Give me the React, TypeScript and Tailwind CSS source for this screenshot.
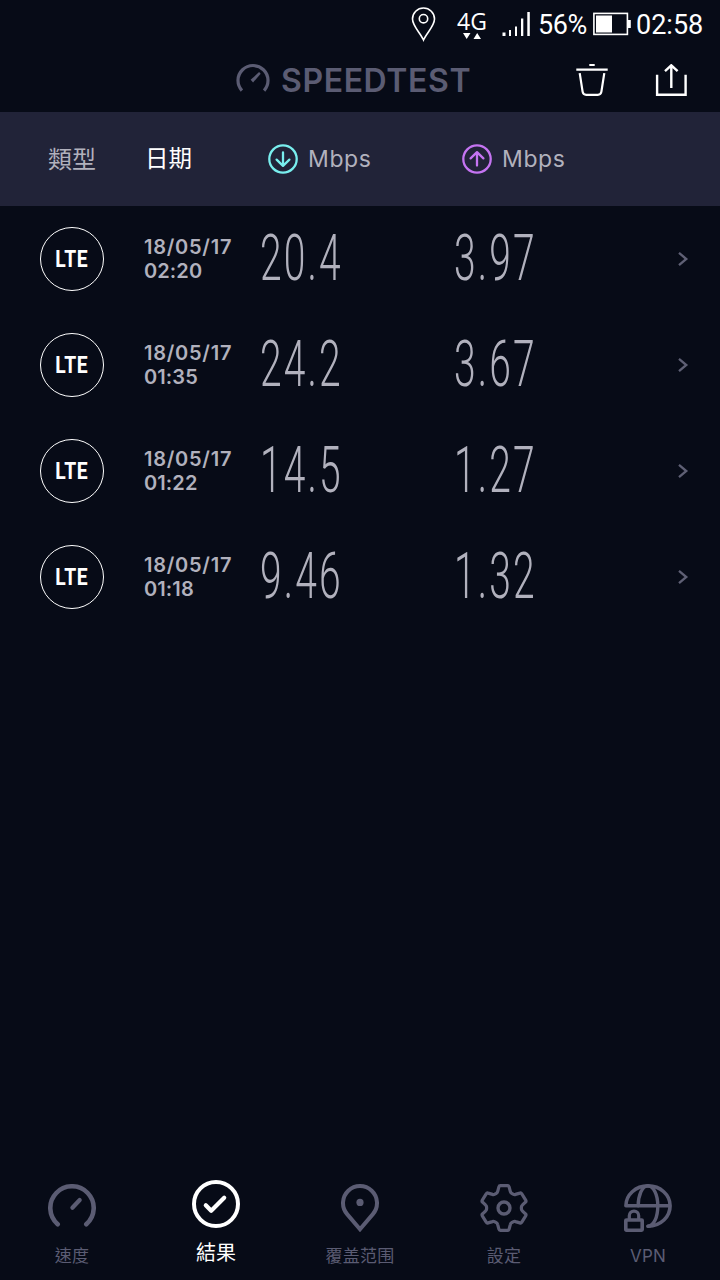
type Result = {
  id: string;
  date: string;
  time: string;
  download: string;
  upload: string;
};

const results: Result[] = [
  { id: "1", date: "18/05/17", time: "02:20", download: "20.4", upload: "3.97" },
  { id: "2", date: "18/05/17", time: "01:35", download: "24.2", upload: "3.67" },
  { id: "3", date: "18/05/17", time: "01:22", download: "14.5", upload: "1.27" },
  { id: "4", date: "18/05/17", time: "01:18", download: "9.46", upload: "1.32" },
];

function StatusBar() {
  return (
    <div className="flex h-12 items-start pl-[411px] text-white">
      <svg className="mt-[7px] h-[35px] w-[25px]" viewBox="0 0 25 35" fill="none" stroke="currentColor" strokeWidth="1.6">
        <path d="M12.5 33C9.5 26 1.5 19 1.5 12a11 11 0 0 1 22 0c0 7-8 14-11 21Z" />
        <circle cx="12.5" cy="11.7" r="4.2" />
      </svg>
      <div className="ml-5 mt-2.5 flex w-8 flex-col items-center">
        <span className="font-['Open_Sans',sans-serif] text-[23px] leading-[23px]">4G</span>
        <svg className="h-[6px] w-[18px]" viewBox="0 0 18 6" fill="currentColor">
          <path d="M0 0h7.5L3.7 6zM10.5 6H18L14.2 0z" />
        </svg>
      </div>
      <svg className="ml-[14px] mt-3 h-6 w-7" viewBox="0 0 28 24" fill="currentColor">
        <path d="M0.5 20.5h3V24h-3zM7 18h2v6H7zM13 14.5h2V24h-2zM19 6.5h2.3V24H19zM25.3 0h2.5v24h-2.5z" />
      </svg>
      <span className="ml-2 mt-2.5 w-[55px] whitespace-nowrap font-[Roboto,sans-serif] text-[27px] leading-[30px] tracking-[-0.4px]">56%</span>
      <svg className="mt-3 h-6 w-[38px]" viewBox="0 0 38 24" fill="none">
        <rect x="0.9" y="1.4" width="33.5" height="21" stroke="currentColor" strokeWidth="1.6" />
        <path d="M3 3.5h16v17H3zM35 8h2.8v8H35z" fill="currentColor" />
      </svg>
      <span className="ml-[5px] mt-2.5 whitespace-nowrap font-[Roboto,sans-serif] text-[27px] leading-[30px]">02:58</span>
    </div>
  );
}

function Header() {
  return (
    <header className="flex h-16 items-start pl-[236px]">
      <svg className="mt-[15px] h-[34px] w-[34px] text-[#5b5c73]" viewBox="0 0 34 34" fill="none" stroke="currentColor" strokeWidth="3.2">
        <path d="M5.9 27.6A15 15 0 1 1 28.1 27.6" />
        <path d="m14.6 16.8 8.5-7.7 1.6 1.7-7.6 8.6z" fill="currentColor" stroke="none" />
      </svg>
      <h1 className="ml-[11px] mt-[15px] w-[190px] whitespace-nowrap font-[Inter,sans-serif] text-[32px] font-semibold leading-9 tracking-[0.6px] text-[#5b5c73]">
        SPEEDTEST
      </h1>
      <button type="button" aria-label="Delete" className="ml-[105px] mt-4 text-white">
        <svg className="h-8 w-8" viewBox="0 0 32 32" fill="none" stroke="currentColor" strokeWidth="2.2">
          <path d="M13.3 1h5.4M0.3 5.6h31.4" />
          <path d="m3.7 9.2 2.9 18.4q.5 3.2 3.6 3.2h11.6q3.1 0 3.6-3.2l2.9-18.4" />
        </svg>
      </button>
      <button type="button" aria-label="Share" className="ml-[47px] mt-4 text-white">
        <svg className="h-8 w-8" viewBox="0 0 32 32" fill="none" stroke="currentColor" strokeWidth="2.4">
          <path d="M2.1 10.8v20h28.5v-20" />
          <path d="M16.3 24V1.5M10 7.2l6.3-5.9 6.3 5.9" />
        </svg>
      </button>
    </header>
  );
}

function ArrowCircle({ up = false }: { up?: boolean }) {
  return (
    <svg className="h-[30px] w-[30px] shrink-0" viewBox="0 0 30 30" fill="none" stroke="currentColor" strokeWidth="2.3" strokeLinecap="round" strokeLinejoin="round">
      <circle cx="15" cy="15" r="13.7" />
      <path d={up ? "M15 21.5V8.5M8.6 14.4 15 8.2l6.4 6.2" : "M15 8.5v13M8.6 15.6 15 21.8l6.4-6.2"} />
    </svg>
  );
}

function TableHead() {
  return (
    <div className="flex h-[94px] items-center bg-[#212338] font-['Noto_Sans_CJK_TC',sans-serif] text-2xl text-[#b1b1bd]">
      <span className="w-[97px] shrink-0 pb-[3px] pl-12">類型</span>
      <span className="w-[171px] shrink-0 pb-[3px] pl-12 text-[23.5px] text-white">日期</span>
      <div className="flex w-[194px] items-center gap-[10px]">
        <span className="text-[#79eeee]">
          <ArrowCircle />
        </span>
        <span className="pt-px font-[Inter,sans-serif] text-[23px] tracking-[0.6px]">Mbps</span>
      </div>
      <div className="flex items-center gap-[10px]">
        <span className="text-[#c574f2]">
          <ArrowCircle up />
        </span>
        <span className="pt-px font-[Inter,sans-serif] text-[23px] tracking-[0.6px]">Mbps</span>
      </div>
    </div>
  );
}

function Speed({ value }: { value: string }) {
  return (
    <span className="w-[194px] shrink-0 pb-[3px]">
      <span className="inline-block origin-left scale-x-[0.6] whitespace-nowrap font-[Roboto,sans-serif] text-[65px] font-light leading-[70px] tracking-[3.6px]">
        {value}
      </span>
    </span>
  );
}

function ResultRow({ result }: { result: Result }) {
  return (
    <li className="flex h-[106px] items-center pl-10 text-[#b1b1bd]">
      <span className="grid h-16 w-16 shrink-0 place-items-center rounded-full border-[1.5px] border-white">
        <span className="origin-center scale-x-[0.84] pt-0.5 font-[Roboto,sans-serif] text-[23px] font-bold tracking-[0.8px] text-white">LTE</span>
      </span>
      <div className="ml-10 w-[116px] shrink-0 whitespace-nowrap font-[Inter,sans-serif] text-xl font-semibold leading-6">
        <p className="tracking-[0.75px]">{result.date}</p>
        <p className="tracking-[0.1px]">{result.time}</p>
      </div>
      <Speed value={result.download} />
      <Speed value={result.upload} />
      <svg className="ml-[29px] h-4 w-3 text-[#5f6075]" viewBox="0 0 12 16" fill="none" stroke="currentColor" strokeWidth="2.3">
        <path d="m2 1.8 7.3 6.2L2 14.2" />
      </svg>
    </li>
  );
}

function SpeedIcon() {
  return (
    <>
      <path strokeWidth="4.6" d="M9.7 40.3A21.7 21.7 0 1 1 38.3 40.3" />
      <path strokeWidth="4.2" d="m24.4 23.8 7.3-7.8" />
    </>
  );
}

function ResultsIcon() {
  return (
    <>
      <circle cx="24" cy="24" r="22" strokeWidth="4" />
      <path strokeWidth="4.2" d="m13.8 25.2 5.4 5.6 13-13" />
    </>
  );
}

function CoverageIcon() {
  return (
    <>
      <path strokeWidth="4" strokeLinejoin="miter" d="M11.1 30.1a17 17 0 1 1 25.8 0L24 45.2Z" />
      <circle cx="24" cy="18.4" r="3.6" fill="currentColor" stroke="none" />
    </>
  );
}

function SettingsIcon() {
  return (
    <>
      <path
        strokeWidth="3.2"
        d="M20.4 1.6h7.2q1.2 0 1.5 1.2l1.2 4.6q.3 1.3 1.4 1.9l1.4.8q1.2.7 2.4.3l4.4-1.3q1.2-.4 1.9.7l3.9 6.4q.7 1.1-.3 2l-3.1 3q-.9.8-.9 1.8v2q0 1 .9 1.8l3.1 3q1 .9.3 2l-3.9 6.4q-.7 1.1-1.9.7l-4.4-1.3q-1.2-.4-2.4.3l-1.4.8q-1.1.6-1.4 1.9l-1.2 4.6q-.3 1.2-1.5 1.2h-7.2q-1.2 0-1.5-1.2l-1.2-4.6q-.3-1.3-1.4-1.9l-1.4-.8q-1.2-.7-2.4-.3l-4.4 1.3q-1.2.4-1.9-.7l-3.9-6.4q-.7-1.1.3-2l3.1-3q.9-.8.9-1.8v-2q0-1-.9-1.8l-3.1-3q-1-.9-.3-2l3.9-6.4q.7-1.1 1.9-.7l4.4 1.3q1.2.4 2.4-.3l1.4-.8q1.1-.6 1.4-1.9l1.2-4.6q.3-1.2 1.5-1.2Z"
      />
      <circle cx="24" cy="24" r="6" strokeWidth="3.4" />
    </>
  );
}

function VpnIcon() {
  return (
    <>
      <path strokeWidth="3.6" d="M1.9 21.7C1.9 10.8 11.5 1.9 24 1.9s22.1 8.9 22.1 19.8S37 42.2 24 42.2M1.9 21.7h44" />
      <path strokeWidth="3.4" d="M14.2 21.7c0-10 3.8-19.8 9.6-19.8s10 8.8 10 19.8-3.8 20.5-9.8 20.5" />
      <rect x="1.8" y="36" width="16.4" height="10.2" rx="0.6" strokeWidth="3.6" />
      <path strokeWidth="3.2" d="M5.3 35v-3.2a4.7 4.7 0 0 1 9.4 0V35" />
    </>
  );
}

const tabs = [
  { label: "速度", Icon: SpeedIcon },
  { label: "結果", Icon: ResultsIcon, active: true },
  { label: "覆盖范围", Icon: CoverageIcon },
  { label: "設定", Icon: SettingsIcon },
  { label: "VPN", Icon: VpnIcon },
];

function TabBar() {
  return (
    <nav className="mt-auto grid h-[104px] grid-cols-5 font-[Inter,'Noto_Sans_CJK_TC',sans-serif]">
      {tabs.map(({ label, Icon, active }) => (
        <button
          key={label}
          type="button"
          className={`flex flex-col items-center ${active ? "pt-1 text-white" : "pt-2 text-[#5b5c73]"}`}
        >
          <svg className="h-12 w-12" viewBox="0 0 48 48" fill="none" stroke="currentColor" strokeLinecap="round" strokeLinejoin="round">
            <Icon />
          </svg>
          <span className={active ? "mt-[11px] text-xl leading-7" : "mt-2.5 text-[17px] leading-7 tracking-[0.2px]"}>{label}</span>
        </button>
      ))}
    </nav>
  );
}

export default function App() {
  return (
    <div className="flex h-[1280px] w-[720px] flex-col overflow-hidden bg-[#070b17]">
      <StatusBar />
      <Header />
      <TableHead />
      <ul>
        {results.map((result) => (
          <ResultRow key={result.id} result={result} />
        ))}
      </ul>
      <TabBar />
    </div>
  );
}
